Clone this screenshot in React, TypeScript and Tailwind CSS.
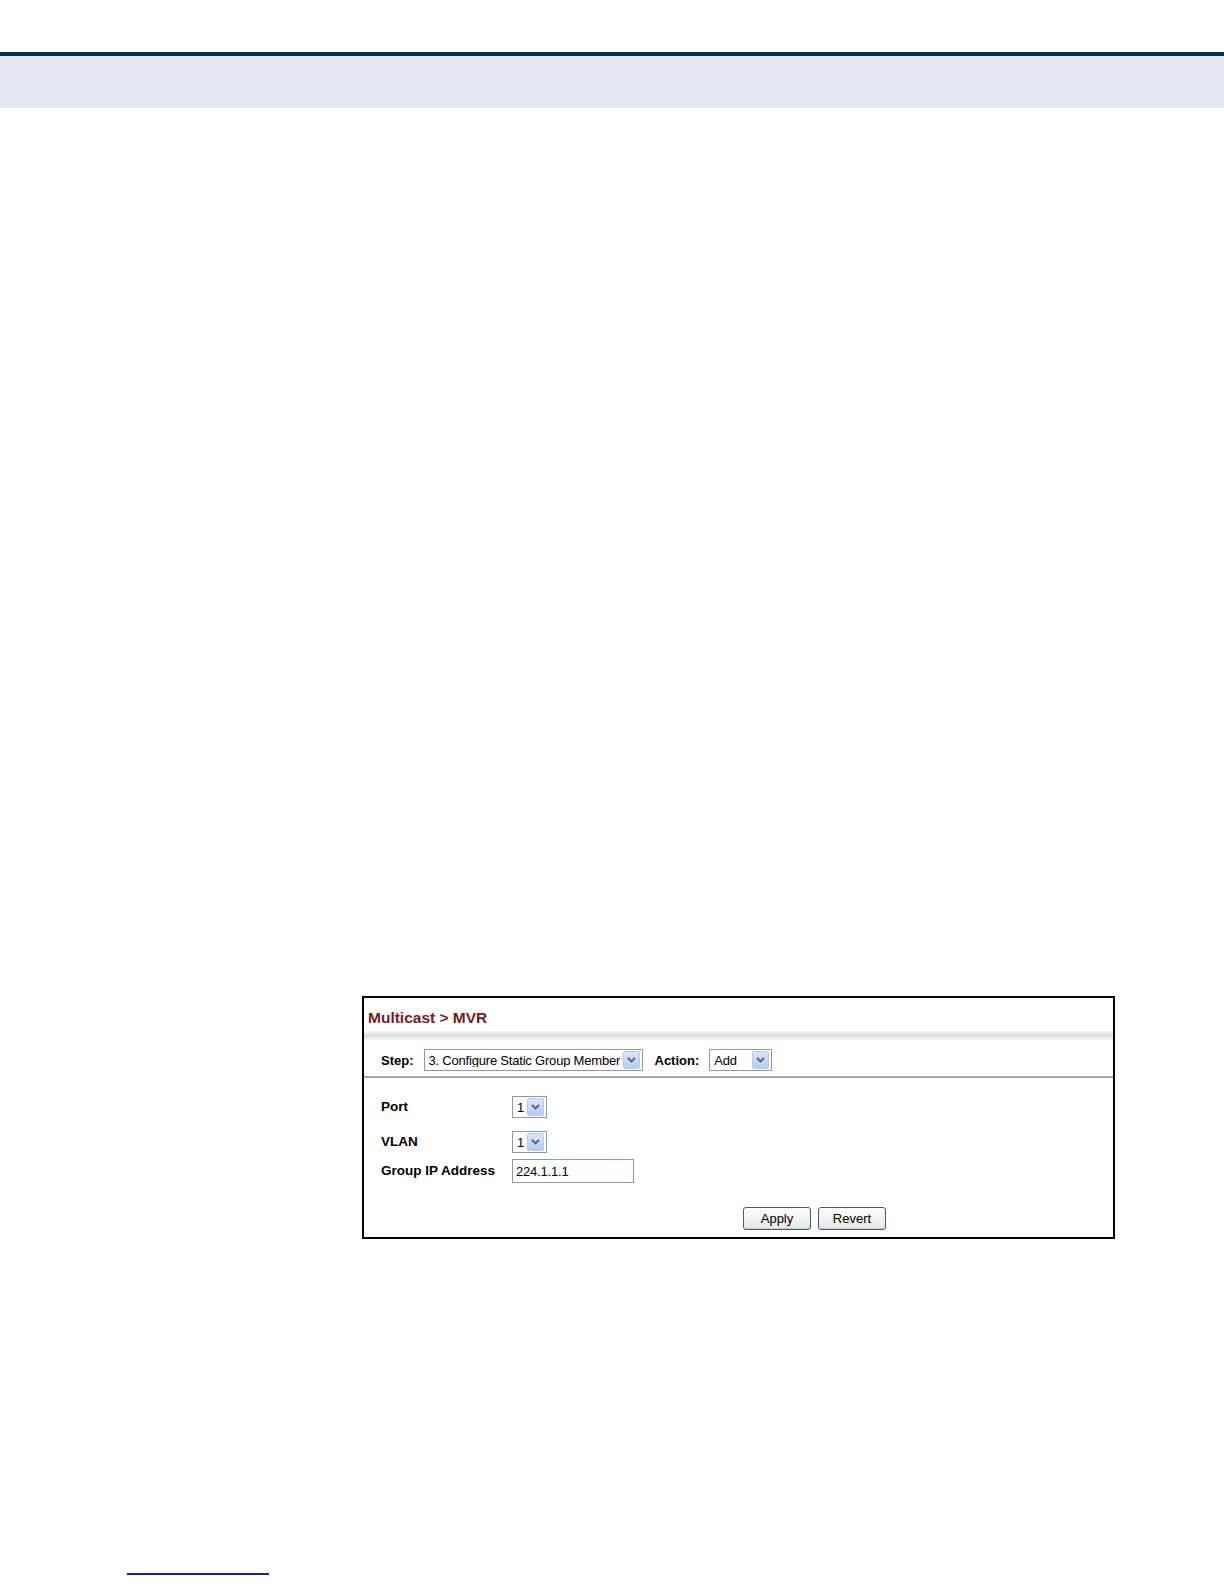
import React from 'react';

const Chevron: React.FC = () => (
    <span className="flex h-[18px] w-[17px] shrink-0 items-center justify-center rounded-[2px] border border-[#b8c8ea] bg-gradient-to-b from-[#dbe5fb] to-[#b8cbf3]">
        <svg width="9" height="6" viewBox="0 0 9 6">
            <path d="M1 1 L4.5 4.5 L8 1" fill="none" stroke="#4d6185" strokeWidth="1.8" />
        </svg>
    </span>
);

const Select: React.FC<{ value: string; width: string }> = ({ value, width }) => (
    <div className={`flex h-[22px] ${width} items-center justify-between border border-[#7f9db9] bg-white pl-[4px] pr-[2px] text-[13px] font-normal text-black`}>
        <span className="overflow-hidden whitespace-nowrap leading-none tracking-[-0.2px]">{value}</span>
        <Chevron />
    </div>
);

const Btn: React.FC<{ label: string }> = ({ label }) => (
    <div className="flex h-[23px] w-[68px] items-center justify-center rounded-[3px] border border-[#3c5a82] bg-gradient-to-b from-white to-[#e6e6e0] text-[13px] text-black shadow-[inset_0_-1px_0_#d0d0c8]">
        {label}
    </div>
);

const App: React.FC = () => {
    return (
        <div className="min-h-[1584px] w-[1224px] bg-white pt-[52px]" style={{ fontFamily: '"Liberation Sans", Arial, sans-serif' }}>
            <div className="h-[4px] bg-[#0b2a5c]"></div>
            <div className="h-[52px] bg-[#e5e8f0]"></div>

            <div className="ml-[362px] mt-[888px] flex h-[243px] w-[753px] flex-col border-2 border-black bg-white">
                <div className="px-[4px] pt-[8px] text-[15.5px] font-bold text-[#7b1a1e]">Multicast &gt; MVR</div>
                <div className="mt-[2px] h-[9px] bg-gradient-to-b from-[#f4f4f4] via-[#dedede] to-[#f6f6f6]"></div>
                <div className="flex items-center pl-[17px] pt-[9px] text-[13px] font-bold text-black">
                    <span>Step:</span>
                    <div className="ml-[10px]"><Select value="3. Configure Static Group Member" width="w-[219px]" /></div>
                    <span className="ml-[12px]">Action:</span>
                    <div className="ml-[10px]"><Select value="Add" width="w-[63px]" /></div>
                </div>
                <div className="mt-[5px] h-[2px] bg-[#a8a8a8]"></div>
                <div className="grid grid-cols-[131px_1fr] items-center gap-y-[10px] pl-[17px] pt-[18px] text-[13.5px] font-bold text-black">
                    <span>Port</span>
                    <Select value="1" width="w-[35px]" />
                    <span className="mt-[3px]">VLAN</span>
                    <div className="mt-[3px]"><Select value="1" width="w-[35px]" /></div>
                    <span className="-mt-[4px]">Group IP Address</span>
                    <div className="-mt-[4px] flex h-[24px] w-[122px] items-center border border-[#7f9db9] bg-white pl-[3px] text-[13px] font-normal tracking-[-0.2px]">224.1.1.1</div>
                </div>
                <div className="flex gap-[7px] pl-[379px] pt-[24px]">
                    <Btn label="Apply" />
                    <Btn label="Revert" />
                </div>
            </div>

            <div className="ml-[127px] mt-[334px] h-[2px] w-[142px] bg-[#1c1c96]"></div>
        </div>
    );
};

export default App;
